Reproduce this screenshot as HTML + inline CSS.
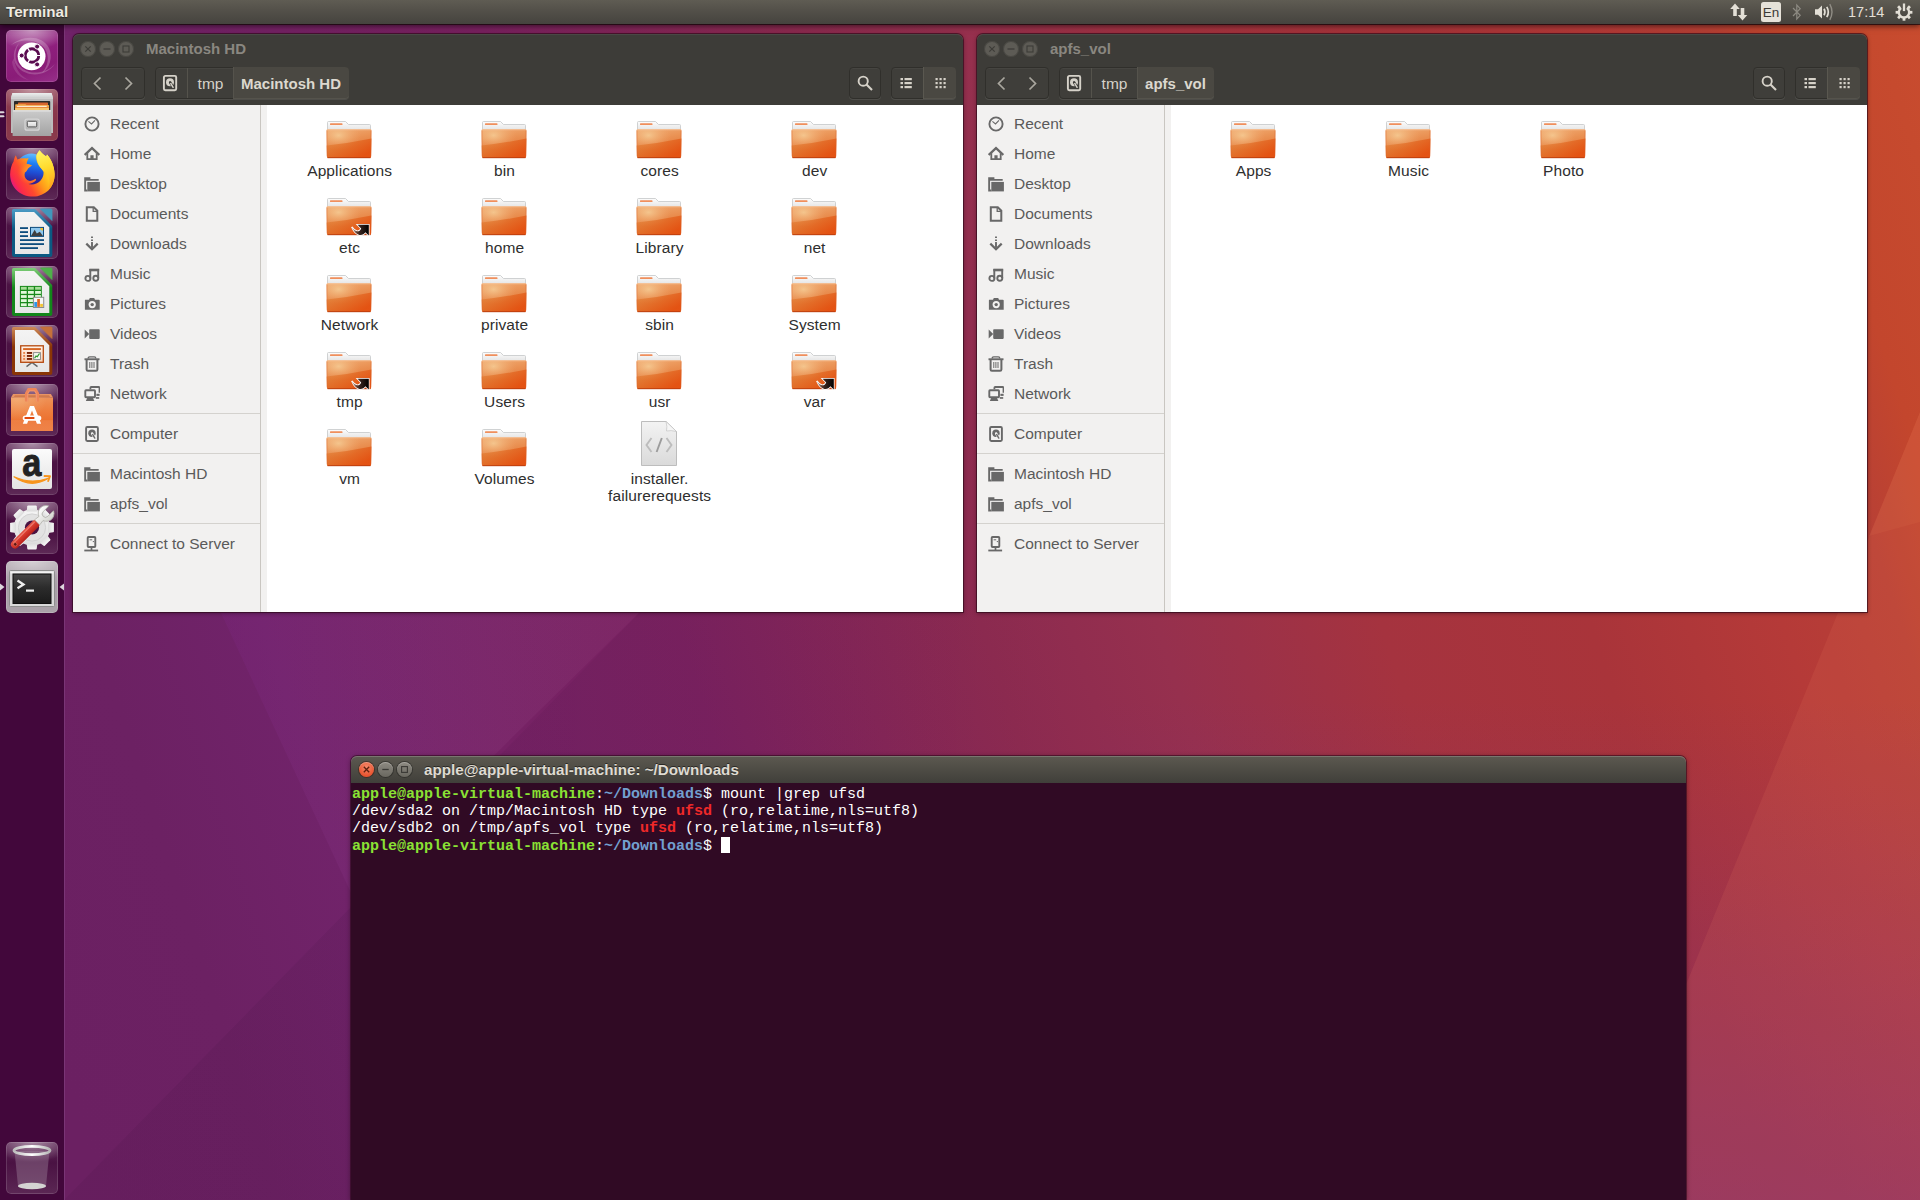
<!DOCTYPE html>
<html lang="en">
<head>
<meta charset="utf-8">
<title>Ubuntu Desktop</title>
<style>
html,body{margin:0;padding:0;}
body{width:1920px;height:1200px;overflow:hidden;background:#6c2163;font-family:"Liberation Sans","DejaVu Sans",sans-serif;font-size:15px;color:#3c3c3c;}
#desktop{position:relative;width:1920px;height:1200px;overflow:hidden;}
#wall{position:absolute;left:0;top:0;width:1920px;height:1200px;display:block;}
svg{display:block;}
.abs{position:absolute;}
/* top panel */
#panel{position:absolute;left:0;top:0;width:1920px;height:24px;background:linear-gradient(#5f5c53 0%,#54514a 40%,#45433e 100%);box-shadow:0 1px 0 rgba(25,8,12,.75),0 2px 6px rgba(0,0,0,.6);}
#panel .title{position:absolute;left:6px;top:0;height:24px;line-height:24px;font-weight:bold;font-size:15.200px;color:#eeeae1;text-shadow:0 1px 1px rgba(0,0,0,.45);letter-spacing:0;}
#panel .ind{position:absolute;top:0;height:24px;}
#panel .clock{position:absolute;left:1848px;top:0;width:36px;height:24px;line-height:24px;font-size:14.5px;color:#e3dfd6;text-align:center;white-space:nowrap;}
#panel .en{position:absolute;left:1761px;top:2px;width:20px;height:20px;border-radius:2.5px;background:#e6e2d9;color:#3c3b37;font-weight:normal;font-size:13.500px;line-height:22px;text-align:center;letter-spacing:0;}
/* launcher */
#launcher{position:absolute;left:0;top:24px;width:64px;height:1176px;background:#42073b;border-right:1px solid #7a3576;}
.tile{position:absolute;left:6px;width:52px;height:52px;border-radius:5px;box-sizing:border-box;overflow:hidden;}
.tile svg{position:absolute;left:0;top:0;}
.tile.dk{background:radial-gradient(ellipse 42px 22px at 50% 0%,rgba(255,255,255,.5),rgba(255,255,255,0) 100%),linear-gradient(#5c2454 0%,#4b1243 40%,#4c1344 62%,#5e2a57 100%);box-shadow:inset 0 0 0 1px rgba(255,255,255,.13);}
/* windows */
.win{position:absolute;border-radius:6px 6px 0 0;box-shadow:0 0 0 1px rgba(45,8,25,.62),0 1px 4px rgba(20,0,10,.5);}
.hdr{position:absolute;left:0;top:0;width:100%;height:71px;background:#3d3c38;border-radius:6px 6px 0 0;box-shadow:inset 0 1px 0 rgba(255,255,255,.07);}
.wtitle{position:absolute;left:73px;top:5px;height:20px;line-height:20px;font-weight:bold;font-size:15px;color:#8a8780;white-space:nowrap;}
.wb{position:absolute;top:7px;width:16px;height:16px;border-radius:8px;background:#5d5b55;box-shadow:inset 0 0 0 1px rgba(40,40,36,.35);}
.tbtn{position:absolute;top:33px;height:32px;box-sizing:border-box;border:1px solid #302f2b;background:#3f3e3a;border-radius:4px;box-shadow:inset 0 1px 0 rgba(255,255,255,.04),0 1px 0 rgba(255,255,255,.09);}
.pathtxt{position:absolute;top:0;height:30px;line-height:31px;font-size:15.500px;color:#d6d2c9;white-space:nowrap;text-align:center;}
.side{position:absolute;left:0;top:71px;width:187px;height:507px;background:#f2f1f0;border-right:1px solid #c9c6c1;}
.gap{position:absolute;left:188px;top:71px;width:6px;height:507px;background:#f2f1f0;}
.files{position:absolute;left:194px;top:71px;width:696px;height:507px;background:#fff;}
.srow{position:absolute;left:0;width:187px;height:30px;}
.srow .lab{position:absolute;left:37px;top:0;height:30px;line-height:30px;font-size:15.500px;color:#5a5a5a;white-space:nowrap;}
.srow svg{position:absolute;left:11px;top:7px;}
.ssep{position:absolute;left:0;width:187px;height:1px;background:#d4d2ce;}
.item{position:absolute;width:150px;text-align:center;}
.item .lab{position:absolute;left:.6px;width:150px;text-align:center;font-size:15.500px;letter-spacing:.1px;line-height:17px;color:#2e2e2e;white-space:nowrap;}
/* terminal */
#term{position:absolute;left:351px;top:756px;width:1335px;height:444px;border-radius:6px 6px 0 0;box-shadow:0 0 0 1px rgba(45,8,25,.55),0 1px 5px rgba(20,0,10,.5);}
#term .tb{position:absolute;left:0;top:0;width:100%;height:27px;border-radius:6px 6px 0 0;background:linear-gradient(#5c5950,#403f3a);box-shadow:inset 0 1px 0 rgba(255,255,255,.18);}
#term .tt{position:absolute;left:73px;top:3px;height:22px;line-height:22px;font-weight:bold;font-size:15.200px;color:#dfdbd2;white-space:nowrap;text-shadow:0 -1px 0 rgba(0,0,0,.5);}
#term .body{position:absolute;left:0;top:27px;width:100%;height:417px;background:#300a24;}
#term pre{position:absolute;left:1px;top:2.500px;margin:0;font-family:"Liberation Mono","DejaVu Sans Mono",monospace;font-size:15px;line-height:17px;color:#fff;}
.g{color:#8ae234;font-weight:bold;}
.b{color:#729fcf;font-weight:bold;}
.r{color:#ef2929;font-weight:bold;}
.cur{display:inline-block;width:9px;height:16px;background:#fff;vertical-align:-3px;}

</style>
</head>
<body>
<div id="desktop">
<svg id="wall" width="1920" height="1200" viewBox="0 0 1920 1200">
<defs>
<linearGradient id="wg" gradientUnits="userSpaceOnUse" x1="0" y1="1200" x2="2089" y2="521">
<stop offset="0" stop-color="#6b2062"/>
<stop offset="0.045" stop-color="#6b2062"/>
<stop offset="0.121" stop-color="#6c2163"/>
<stop offset="0.195" stop-color="#71236a"/>
<stop offset="0.374" stop-color="#7a2160"/>
<stop offset="0.506" stop-color="#8c2a50"/>
<stop offset="0.582" stop-color="#96304e"/>
<stop offset="0.679" stop-color="#a5333f"/>
<stop offset="0.77" stop-color="#a9343a"/>
<stop offset="0.853" stop-color="#b53a38"/>
<stop offset="0.904" stop-color="#b84035"/>
<stop offset="0.935" stop-color="#c3462d"/>
<stop offset="0.977" stop-color="#c64a2e"/>
<stop offset="1" stop-color="#c94c2f"/>
</linearGradient>
<linearGradient id="wb" gradientUnits="userSpaceOnUse" x1="0" y1="700" x2="0" y2="1200"><stop offset="0" stop-color="#7a2e80" stop-opacity="0"/><stop offset="1" stop-color="#7a2e80" stop-opacity=".5"/></linearGradient>
<linearGradient id="wd" gradientUnits="userSpaceOnUse" x1="350" y1="0" x2="1100" y2="0"><stop offset="0" stop-color="#1a0020" stop-opacity=".065"/><stop offset="1" stop-color="#1a0020" stop-opacity="0"/></linearGradient>
<linearGradient id="wl" gradientUnits="userSpaceOnUse" x1="220" y1="0" x2="640" y2="0"><stop offset="0" stop-color="#8a2aa0" stop-opacity=".13"/><stop offset="1" stop-color="#e0a0c0" stop-opacity=".045"/></linearGradient>
</defs>
<rect width="1920" height="1200" fill="url(#wg)"/>
<rect x="1100" y="700" width="820" height="500" fill="url(#wb)"/>
<polygon points="64,1200 652,600 1100,600 1100,1200" fill="url(#wd)"/>
<polygon points="215,600 652,600 352,895" fill="url(#wl)"/>
<polygon points="1920,412 1920,1200 1598,1200" fill="#ff9868" opacity="0.1"/>
<polygon points="1869,536 1920,522 1920,412" fill="#ff9868" opacity="0.08"/>
</svg>

<svg width="0" height="0" style="position:absolute">
<defs>
<linearGradient id="fo1" x1="0" y1="0" x2="0.300" y2="1"><stop offset="0" stop-color="#f1ae76"/><stop offset="0.45" stop-color="#ea9254"/><stop offset="1" stop-color="#e26e2e"/></linearGradient>
<radialGradient id="fo2" cx="0.27" cy="0.22" r="0.5"><stop offset="0" stop-color="#f6cf98" stop-opacity=".8"/><stop offset="1" stop-color="#f0aa70" stop-opacity="0"/></radialGradient>
<linearGradient id="fo3" x1="0" y1="0" x2="0" y2="1"><stop offset="0" stop-color="#fdfdfd"/><stop offset="1" stop-color="#dcdcdc"/></linearGradient>
<linearGradient id="fo4" x1="0" y1="0" x2="1" y2="0.600"><stop offset="0" stop-color="#df8032" stop-opacity=".55"/><stop offset="1" stop-color="#e44c0c" stop-opacity=".8"/></linearGradient>
<linearGradient id="lk1" x1="0" y1="0" x2="1" y2="0"><stop offset="0" stop-color="#8a5a48" stop-opacity=".7"/><stop offset="0.45" stop-color="#3a2620"/><stop offset="1" stop-color="#000"/></linearGradient>
<g id="fold">
<path d="M1.500 1.500 Q1.500 0.500 2.500 0.500 H19.500 L22.500 3.500 H43.500 Q44.500 3.500 44.500 4.500 V12 H1.500 Z" fill="url(#fo3)" stroke="#c4c6c8" stroke-width=".8"/>
<rect x="4" y="2.300" width="12.500" height="1.700" rx=".6" fill="#f08f5c"/>
<path d="M0.500 9.500 Q0.500 8 2 8 H44 Q45.500 8 45.500 9.500 L45 35.500 Q45 37 43.500 37 H2.500 Q1 37 1 35.500 Z" fill="url(#fo1)"/>
<path d="M0.500 9.500 Q0.500 8 2 8 H44 Q45.500 8 45.500 9.500 L45 35.500 Q45 37 43.500 37 H2.500 Q1 37 1 35.500 Z" fill="url(#fo2)"/>
<path d="M0.600 24.500 Q24 22 45.400 17.500 L45 35.500 Q45 37 43.500 37 H2.500 Q1 37 1 35.500 Z" fill="url(#fo4)"/>
<path d="M1.500 36.600 H44.500" stroke="#b83a0c" stroke-width="1.100" opacity=".7"/>
<path d="M1.200 8.700 H44.800" stroke="#f6c9a6" stroke-width=".9" opacity=".9"/>
<path d="M1 9.500 V35.500 M45 9.500 V35.500" stroke="#d9602a" stroke-width=".8" opacity=".5"/>
</g>
<g id="lnk">
<path d="M31.500 26.700 H42.800 V37.600 L39.400 34.200 C37 37.900 30.500 39.500 25.800 29 C29.500 34.800 33.600 34.200 35.200 30.400 Z" fill="url(#lk1)" stroke="#fff" stroke-width="1.500" stroke-linejoin="miter" paint-order="stroke"/>
</g>
</defs>
</svg><div class="win" style="left:73px;top:34px;width:890px;height:578px;"><div class="hdr"><div class="wb" style="left:7px"><svg width="16" height="16" viewBox="0 0 16 16"><path d="M5.300 5.300 L10.700 10.700 M10.700 5.300 L5.300 10.700" stroke="#3d3c38" stroke-width="1.200"/></svg></div><div class="wb" style="left:26px"><svg width="16" height="16" viewBox="0 0 16 16"><path d="M4.500 8 H11.500" stroke="#3d3c38" stroke-width="1.300"/></svg></div><div class="wb" style="left:45px"><svg width="16" height="16" viewBox="0 0 16 16"><rect x="5" y="5" width="6" height="6" fill="none" stroke="#3d3c38" stroke-width="1.100"/></svg></div><div class="wtitle">Macintosh HD</div><div class="tbtn" style="left:8px;width:64px;"><svg class="abs" style="left:0;top:0" width="62" height="30" viewBox="0 0 62 30"><path d="M18.500 9.500 L12.500 15.500 L18.500 21.500" fill="none" stroke="#aaa79f" stroke-width="1.700"/><path d="M43.500 9.500 L49.500 15.500 L43.500 21.500" fill="none" stroke="#aaa79f" stroke-width="1.700"/></svg></div><div class="tbtn" style="left:82px;width:194px;"><svg class="abs" style="left:5px;top:6px" width="18" height="18" viewBox="0 0 18 18"><rect x="2.900" y="1.900" width="12.300" height="14.300" rx="1.400" fill="none" stroke="#d6d2c9" stroke-width="1.900"/><circle cx="9" cy="8.200" r="4" fill="#d6d2c9"/><path d="M9.200 8.500 L12.200 13.400" stroke="#3d3c38" stroke-width="2.600" stroke-linecap="round"/><path d="M9.600 9.200 L12.100 13.300" stroke="#d6d2c9" stroke-width="1.500" stroke-linecap="round"/><circle cx="9" cy="8.200" r="1" fill="#3d3c38"/></svg><div class="abs" style="left:31px;top:0;width:1px;height:30px;background:#55534c"></div><div class="pathtxt" style="left:32px;width:45px;">tmp</div><div class="abs" style="left:77px;top:-1px;width:116px;height:32px;background:#4a4842;border-radius:0 4px 4px 0;box-shadow:inset 1px 0 0 #55534c,inset 0 -1px 0 #55534c;"></div><div class="pathtxt" style="left:77px;width:116px;font-weight:bold;font-size:15px;color:#dcd8cf;">Macintosh HD</div></div><div class="tbtn" style="left:776px;width:32px;"><svg class="abs" style="left:0;top:0" width="30" height="30" viewBox="0 0 30 30"><circle cx="13.200" cy="13.200" r="4.600" fill="none" stroke="#d6d2c9" stroke-width="1.900"/><path d="M16.500 16.500 L22 22" stroke="#d6d2c9" stroke-width="2.100"/></svg></div><div class="tbtn" style="left:818px;width:65px;"><div class="abs" style="left:31px;top:-1px;width:33px;height:32px;background:#4a4842;border-radius:0 4px 4px 0;box-shadow:inset 1px 0 0 #5a5850,inset 0 -1px 0 #55534c;"></div><svg class="abs" style="left:0;top:0" width="63" height="30" viewBox="0 0 63 30"><g fill="#d6d2c9"><rect x="8.500" y="10" width="2.500" height="2.200"/><rect x="12.500" y="10" width="7.300" height="2.200"/><rect x="8.500" y="14" width="2.500" height="2.200"/><rect x="12.500" y="14" width="7.300" height="2.200"/><rect x="8.500" y="18" width="2.500" height="2.200"/><rect x="12.500" y="18" width="7.300" height="2.200"/><rect x="43.5" y="10" width="2.200" height="2.200"/><rect x="43.5" y="14" width="2.200" height="2.200"/><rect x="43.5" y="18" width="2.200" height="2.200"/><rect x="47.5" y="10" width="2.200" height="2.200"/><rect x="47.5" y="14" width="2.200" height="2.200"/><rect x="47.5" y="18" width="2.200" height="2.200"/><rect x="51.5" y="10" width="2.200" height="2.200"/><rect x="51.5" y="14" width="2.200" height="2.200"/><rect x="51.5" y="18" width="2.200" height="2.200"/></g></svg></div></div><div class="side"><div class="srow" style="top:4px"><svg width="16" height="16" viewBox="0 0 16 16" ><circle cx="8" cy="8" r="6.600" fill="none" stroke="#686868" stroke-width="1.900"/><path d="M4.400 5.400 L7.500 8 L11 4.300" fill="none" stroke="#686868" stroke-width="1.100"/></svg><div class="lab">Recent</div></div><div class="srow" style="top:34px"><svg width="16" height="16" viewBox="0 0 16 16" ><path d="M0.700 8.900 L8 2.100 L15.300 8.900" fill="none" stroke="#686868" stroke-width="2.200"/><path d="M2.400 8.300 V14 H13.600 V8.300 L11.800 6.600 V12.200 H9.600 V9.200 H6.400 V12.200 H4.200 V6.600 Z" fill="#686868"/></svg><div class="lab">Home</div></div><div class="srow" style="top:64px"><svg width="16" height="16" viewBox="0 0 16 16" ><path d="M0.200 1.300 H6.400 V3 H14.700 V4.700 H2.100 V13.600 H3.400 V15.400 H0.200 Z" fill="#686868"/><rect x="3.300" y="5.900" width="12.600" height="9.500" fill="#686868"/></svg><div class="lab">Desktop</div></div><div class="srow" style="top:94px"><svg width="16" height="16" viewBox="0 0 16 16" ><path d="M2.800 1.200 H9.800 L13.300 4.700 V14.800 H2.800 Z" fill="none" stroke="#686868" stroke-width="2" stroke-linejoin="miter"/><path d="M9.200 1.200 V5.400 H13.300" fill="none" stroke="#686868" stroke-width="1.300"/></svg><div class="lab">Documents</div></div><div class="srow" style="top:124px"><svg width="16" height="16" viewBox="0 0 16 16" ><path d="M8 0.500 V7" fill="none" stroke="#686868" stroke-width="1.900" stroke-dasharray="1.600 1.300"/><path d="M2.300 7.600 L8 13.300 L13.700 7.600" fill="none" stroke="#686868" stroke-width="2.200"/><rect x="7.050" y="6.300" width="1.900" height="5.500" fill="#686868"/></svg><div class="lab">Downloads</div></div><div class="srow" style="top:154px"><svg width="16" height="16" viewBox="0 0 16 16" ><path d="M6.300 12.500 V4 H14.200 V12" fill="none" stroke="#686868" stroke-width="1.900"/><rect x="5.350" y="2.700" width="9.800" height="2.600" fill="#686868"/><circle cx="3.900" cy="12.400" r="2.500" fill="none" stroke="#686868" stroke-width="1.900"/><circle cx="11.800" cy="12.300" r="2.500" fill="none" stroke="#686868" stroke-width="1.900"/></svg><div class="lab">Music</div></div><div class="srow" style="top:184px"><svg width="16" height="16" viewBox="0 0 16 16" ><path d="M1.200 3.700 H5 L5.800 2 H10.200 L11 3.700 H14.800 Q15.700 3.700 15.700 4.500 V13.700 H0.900 V4.500 Q0.900 3.700 1.200 3.700 Z" fill="#686868"/><circle cx="8.200" cy="8.600" r="3.600" fill="#f2f1f0"/><circle cx="8.200" cy="8.600" r="1.700" fill="#686868"/></svg><div class="lab">Pictures</div></div><div class="srow" style="top:214px"><svg width="16" height="16" viewBox="0 0 16 16" ><rect x="5.200" y="3.300" width="10.500" height="9.600" rx="0.800" fill="#686868"/><path d="M0.700 3.600 L5.200 8.100 L0.700 12.600 Z" fill="#686868"/></svg><div class="lab">Videos</div></div><div class="srow" style="top:244px"><svg width="16" height="16" viewBox="0 0 16 16" ><path d="M4.200 2.400 Q4.200 0.900 5.700 0.900 H10.300 Q11.800 0.900 11.800 2.400" fill="none" stroke="#686868" stroke-width="1.400"/><rect x="0.500" y="2.300" width="15" height="1.900" fill="#686868"/><path d="M2.600 4 V13.400 Q2.600 14.700 3.900 14.700 H12.100 Q13.400 14.700 13.400 13.400 V4" fill="none" stroke="#686868" stroke-width="2"/><path d="M5.800 6 V12 M7.900 6 V12 M10 6 V12" stroke="#686868" stroke-width="1"/></svg><div class="lab">Trash</div></div><div class="srow" style="top:274px"><svg width="16" height="16" viewBox="0 0 16 16" ><path d="M6.400 3.200 V1.800 Q6.400 1 7.200 1 H14.700 Q15.500 1 15.500 1.800 V6.800" fill="none" stroke="#686868" stroke-width="1.800"/><path d="M12.400 9.900 H15.600 V7.800 H12.400 Z" fill="#686868"/><rect x="1.300" y="4.300" width="9.700" height="7" rx="0.700" fill="none" stroke="#686868" stroke-width="1.900"/><path d="M3.200 12 H9 L10.400 15 H1.800 Z" fill="#686868"/><path d="M11.800 11.100 H15.200 V12.800 H11.800 Z" fill="#686868"/></svg><div class="lab">Network</div></div><div class="ssep" style="top:308px"></div><div class="srow" style="top:314px"><svg width="16" height="16" viewBox="0 0 16 16" ><rect x="2.100" y="1" width="11.800" height="14" rx="1.200" fill="none" stroke="#686868" stroke-width="1.900"/><circle cx="8" cy="7.300" r="3.700" fill="#686868"/><path d="M8.200 7.600 L10.900 12.200" stroke="#f2f1f0" stroke-width="2.500" stroke-linecap="round"/><path d="M8.600 8.300 L10.800 12.100" stroke="#686868" stroke-width="1.400" stroke-linecap="round"/><circle cx="8" cy="7.300" r="0.900" fill="#f2f1f0"/></svg><div class="lab">Computer</div></div><div class="ssep" style="top:348px"></div><div class="srow" style="top:354px"><svg width="16" height="16" viewBox="0 0 16 16" ><path d="M0.200 1.300 H6.400 V3 H14.700 V4.700 H2.100 V13.600 H3.400 V15.400 H0.200 Z" fill="#686868"/><rect x="3.300" y="5.900" width="12.600" height="9.500" fill="#686868"/></svg><div class="lab">Macintosh HD</div></div><div class="srow" style="top:384px"><svg width="16" height="16" viewBox="0 0 16 16" ><path d="M0.200 1.300 H6.400 V3 H14.700 V4.700 H2.100 V13.600 H3.400 V15.400 H0.200 Z" fill="#686868"/><rect x="3.300" y="5.900" width="12.600" height="9.500" fill="#686868"/></svg><div class="lab">apfs_vol</div></div><div class="ssep" style="top:418px"></div><div class="srow" style="top:424px"><svg width="16" height="16" viewBox="0 0 16 16" ><rect x="3.700" y="1" width="7.600" height="10" rx="0.800" fill="none" stroke="#686868" stroke-width="1.900"/><rect x="5.600" y="3.300" width="2.600" height="1" fill="#686868"/><rect x="8.800" y="5" width="1.100" height="1.100" fill="#686868"/><path d="M7.500 11.500 V14" stroke="#686868" stroke-width="1.700"/><rect x="0.300" y="13.600" width="13.800" height="1.800" fill="#686868"/></svg><div class="lab">Connect to Server</div></div></div><div class="gap"></div><div class="files"><div class="item" style="left:7px;top:16px;"><svg class="abs" style="left:52px;top:0" width="46" height="38" viewBox="0 0 46 38"><use href="#fold"/></svg><div class="lab" style="top:41px">Applications</div></div><div class="item" style="left:162px;top:16px;"><svg class="abs" style="left:52px;top:0" width="46" height="38" viewBox="0 0 46 38"><use href="#fold"/></svg><div class="lab" style="top:41px">bin</div></div><div class="item" style="left:317px;top:16px;"><svg class="abs" style="left:52px;top:0" width="46" height="38" viewBox="0 0 46 38"><use href="#fold"/></svg><div class="lab" style="top:41px">cores</div></div><div class="item" style="left:472px;top:16px;"><svg class="abs" style="left:52px;top:0" width="46" height="38" viewBox="0 0 46 38"><use href="#fold"/></svg><div class="lab" style="top:41px">dev</div></div><div class="item" style="left:7px;top:93px;"><svg class="abs" style="left:52px;top:0" width="46" height="38" viewBox="0 0 46 38"><use href="#fold"/><use href="#lnk"/></svg><div class="lab" style="top:41px">etc</div></div><div class="item" style="left:162px;top:93px;"><svg class="abs" style="left:52px;top:0" width="46" height="38" viewBox="0 0 46 38"><use href="#fold"/></svg><div class="lab" style="top:41px">home</div></div><div class="item" style="left:317px;top:93px;"><svg class="abs" style="left:52px;top:0" width="46" height="38" viewBox="0 0 46 38"><use href="#fold"/></svg><div class="lab" style="top:41px">Library</div></div><div class="item" style="left:472px;top:93px;"><svg class="abs" style="left:52px;top:0" width="46" height="38" viewBox="0 0 46 38"><use href="#fold"/></svg><div class="lab" style="top:41px">net</div></div><div class="item" style="left:7px;top:170px;"><svg class="abs" style="left:52px;top:0" width="46" height="38" viewBox="0 0 46 38"><use href="#fold"/></svg><div class="lab" style="top:41px">Network</div></div><div class="item" style="left:162px;top:170px;"><svg class="abs" style="left:52px;top:0" width="46" height="38" viewBox="0 0 46 38"><use href="#fold"/></svg><div class="lab" style="top:41px">private</div></div><div class="item" style="left:317px;top:170px;"><svg class="abs" style="left:52px;top:0" width="46" height="38" viewBox="0 0 46 38"><use href="#fold"/></svg><div class="lab" style="top:41px">sbin</div></div><div class="item" style="left:472px;top:170px;"><svg class="abs" style="left:52px;top:0" width="46" height="38" viewBox="0 0 46 38"><use href="#fold"/></svg><div class="lab" style="top:41px">System</div></div><div class="item" style="left:7px;top:247px;"><svg class="abs" style="left:52px;top:0" width="46" height="38" viewBox="0 0 46 38"><use href="#fold"/><use href="#lnk"/></svg><div class="lab" style="top:41px">tmp</div></div><div class="item" style="left:162px;top:247px;"><svg class="abs" style="left:52px;top:0" width="46" height="38" viewBox="0 0 46 38"><use href="#fold"/></svg><div class="lab" style="top:41px">Users</div></div><div class="item" style="left:317px;top:247px;"><svg class="abs" style="left:52px;top:0" width="46" height="38" viewBox="0 0 46 38"><use href="#fold"/></svg><div class="lab" style="top:41px">usr</div></div><div class="item" style="left:472px;top:247px;"><svg class="abs" style="left:52px;top:0" width="46" height="38" viewBox="0 0 46 38"><use href="#fold"/><use href="#lnk"/></svg><div class="lab" style="top:41px">var</div></div><div class="item" style="left:7px;top:324px;"><svg class="abs" style="left:52px;top:0" width="46" height="38" viewBox="0 0 46 38"><use href="#fold"/></svg><div class="lab" style="top:41px">vm</div></div><div class="item" style="left:162px;top:324px;"><svg class="abs" style="left:52px;top:0" width="46" height="38" viewBox="0 0 46 38"><use href="#fold"/></svg><div class="lab" style="top:41px">Volumes</div></div><div class="item" style="left:317px;top:316px;"><svg class="abs" style="left:56px;top:0" width="38" height="46" viewBox="0 0 38 46"><defs><linearGradient id="pg1" x1="0" y1="0" x2="0" y2="1"><stop offset="0" stop-color="#f3f3f3"/><stop offset="1" stop-color="#dadada"/></linearGradient></defs><path d="M1.500 0.500 H26 L36.500 10.500 V44.500 H1.500 Z" fill="url(#pg1)" stroke="#bdbdbd" stroke-width="1"/><path d="M26 0.500 Q27.500 6 26.500 10 Q31 9 36.500 10.500 Z" fill="#f6f6f6" stroke="#c4c4c4" stroke-width=".7"/><path d="M11.500 17 L6.500 24 L11.500 31 M26.500 17 L31.500 24 L26.500 31" fill="none" stroke="#bcbcbc" stroke-width="1.900"/><path d="M21.800 17 L16.600 31" fill="none" stroke="#9c9c9c" stroke-width="1.900"/></svg><div class="lab" style="top:49px">installer.</div><div class="lab" style="top:66px">failurerequests</div></div></div></div><div class="win" style="left:977px;top:34px;width:890px;height:578px;"><div class="hdr"><div class="wb" style="left:7px"><svg width="16" height="16" viewBox="0 0 16 16"><path d="M5.300 5.300 L10.700 10.700 M10.700 5.300 L5.300 10.700" stroke="#3d3c38" stroke-width="1.200"/></svg></div><div class="wb" style="left:26px"><svg width="16" height="16" viewBox="0 0 16 16"><path d="M4.500 8 H11.500" stroke="#3d3c38" stroke-width="1.300"/></svg></div><div class="wb" style="left:45px"><svg width="16" height="16" viewBox="0 0 16 16"><rect x="5" y="5" width="6" height="6" fill="none" stroke="#3d3c38" stroke-width="1.100"/></svg></div><div class="wtitle">apfs_vol</div><div class="tbtn" style="left:8px;width:64px;"><svg class="abs" style="left:0;top:0" width="62" height="30" viewBox="0 0 62 30"><path d="M18.500 9.500 L12.500 15.500 L18.500 21.500" fill="none" stroke="#aaa79f" stroke-width="1.700"/><path d="M43.500 9.500 L49.500 15.500 L43.500 21.500" fill="none" stroke="#aaa79f" stroke-width="1.700"/></svg></div><div class="tbtn" style="left:82px;width:155px;"><svg class="abs" style="left:5px;top:6px" width="18" height="18" viewBox="0 0 18 18"><rect x="2.900" y="1.900" width="12.300" height="14.300" rx="1.400" fill="none" stroke="#d6d2c9" stroke-width="1.900"/><circle cx="9" cy="8.200" r="4" fill="#d6d2c9"/><path d="M9.200 8.500 L12.200 13.400" stroke="#3d3c38" stroke-width="2.600" stroke-linecap="round"/><path d="M9.600 9.200 L12.100 13.300" stroke="#d6d2c9" stroke-width="1.500" stroke-linecap="round"/><circle cx="9" cy="8.200" r="1" fill="#3d3c38"/></svg><div class="abs" style="left:31px;top:0;width:1px;height:30px;background:#55534c"></div><div class="pathtxt" style="left:32px;width:45px;">tmp</div><div class="abs" style="left:77px;top:-1px;width:77px;height:32px;background:#4a4842;border-radius:0 4px 4px 0;box-shadow:inset 1px 0 0 #55534c,inset 0 -1px 0 #55534c;"></div><div class="pathtxt" style="left:77px;width:77px;font-weight:bold;font-size:15px;color:#dcd8cf;">apfs_vol</div></div><div class="tbtn" style="left:776px;width:32px;"><svg class="abs" style="left:0;top:0" width="30" height="30" viewBox="0 0 30 30"><circle cx="13.200" cy="13.200" r="4.600" fill="none" stroke="#d6d2c9" stroke-width="1.900"/><path d="M16.500 16.500 L22 22" stroke="#d6d2c9" stroke-width="2.100"/></svg></div><div class="tbtn" style="left:818px;width:65px;"><div class="abs" style="left:31px;top:-1px;width:33px;height:32px;background:#4a4842;border-radius:0 4px 4px 0;box-shadow:inset 1px 0 0 #5a5850,inset 0 -1px 0 #55534c;"></div><svg class="abs" style="left:0;top:0" width="63" height="30" viewBox="0 0 63 30"><g fill="#d6d2c9"><rect x="8.500" y="10" width="2.500" height="2.200"/><rect x="12.500" y="10" width="7.300" height="2.200"/><rect x="8.500" y="14" width="2.500" height="2.200"/><rect x="12.500" y="14" width="7.300" height="2.200"/><rect x="8.500" y="18" width="2.500" height="2.200"/><rect x="12.500" y="18" width="7.300" height="2.200"/><rect x="43.5" y="10" width="2.200" height="2.200"/><rect x="43.5" y="14" width="2.200" height="2.200"/><rect x="43.5" y="18" width="2.200" height="2.200"/><rect x="47.5" y="10" width="2.200" height="2.200"/><rect x="47.5" y="14" width="2.200" height="2.200"/><rect x="47.5" y="18" width="2.200" height="2.200"/><rect x="51.5" y="10" width="2.200" height="2.200"/><rect x="51.5" y="14" width="2.200" height="2.200"/><rect x="51.5" y="18" width="2.200" height="2.200"/></g></svg></div></div><div class="side"><div class="srow" style="top:4px"><svg width="16" height="16" viewBox="0 0 16 16" ><circle cx="8" cy="8" r="6.600" fill="none" stroke="#686868" stroke-width="1.900"/><path d="M4.400 5.400 L7.500 8 L11 4.300" fill="none" stroke="#686868" stroke-width="1.100"/></svg><div class="lab">Recent</div></div><div class="srow" style="top:34px"><svg width="16" height="16" viewBox="0 0 16 16" ><path d="M0.700 8.900 L8 2.100 L15.300 8.900" fill="none" stroke="#686868" stroke-width="2.200"/><path d="M2.400 8.300 V14 H13.600 V8.300 L11.800 6.600 V12.200 H9.600 V9.200 H6.400 V12.200 H4.200 V6.600 Z" fill="#686868"/></svg><div class="lab">Home</div></div><div class="srow" style="top:64px"><svg width="16" height="16" viewBox="0 0 16 16" ><path d="M0.200 1.300 H6.400 V3 H14.700 V4.700 H2.100 V13.600 H3.400 V15.400 H0.200 Z" fill="#686868"/><rect x="3.300" y="5.900" width="12.600" height="9.500" fill="#686868"/></svg><div class="lab">Desktop</div></div><div class="srow" style="top:94px"><svg width="16" height="16" viewBox="0 0 16 16" ><path d="M2.800 1.200 H9.800 L13.300 4.700 V14.800 H2.800 Z" fill="none" stroke="#686868" stroke-width="2" stroke-linejoin="miter"/><path d="M9.200 1.200 V5.400 H13.300" fill="none" stroke="#686868" stroke-width="1.300"/></svg><div class="lab">Documents</div></div><div class="srow" style="top:124px"><svg width="16" height="16" viewBox="0 0 16 16" ><path d="M8 0.500 V7" fill="none" stroke="#686868" stroke-width="1.900" stroke-dasharray="1.600 1.300"/><path d="M2.300 7.600 L8 13.300 L13.700 7.600" fill="none" stroke="#686868" stroke-width="2.200"/><rect x="7.050" y="6.300" width="1.900" height="5.500" fill="#686868"/></svg><div class="lab">Downloads</div></div><div class="srow" style="top:154px"><svg width="16" height="16" viewBox="0 0 16 16" ><path d="M6.300 12.500 V4 H14.200 V12" fill="none" stroke="#686868" stroke-width="1.900"/><rect x="5.350" y="2.700" width="9.800" height="2.600" fill="#686868"/><circle cx="3.900" cy="12.400" r="2.500" fill="none" stroke="#686868" stroke-width="1.900"/><circle cx="11.800" cy="12.300" r="2.500" fill="none" stroke="#686868" stroke-width="1.900"/></svg><div class="lab">Music</div></div><div class="srow" style="top:184px"><svg width="16" height="16" viewBox="0 0 16 16" ><path d="M1.200 3.700 H5 L5.800 2 H10.200 L11 3.700 H14.800 Q15.700 3.700 15.700 4.500 V13.700 H0.900 V4.500 Q0.900 3.700 1.200 3.700 Z" fill="#686868"/><circle cx="8.200" cy="8.600" r="3.600" fill="#f2f1f0"/><circle cx="8.200" cy="8.600" r="1.700" fill="#686868"/></svg><div class="lab">Pictures</div></div><div class="srow" style="top:214px"><svg width="16" height="16" viewBox="0 0 16 16" ><rect x="5.200" y="3.300" width="10.500" height="9.600" rx="0.800" fill="#686868"/><path d="M0.700 3.600 L5.200 8.100 L0.700 12.600 Z" fill="#686868"/></svg><div class="lab">Videos</div></div><div class="srow" style="top:244px"><svg width="16" height="16" viewBox="0 0 16 16" ><path d="M4.200 2.400 Q4.200 0.900 5.700 0.900 H10.300 Q11.800 0.900 11.800 2.400" fill="none" stroke="#686868" stroke-width="1.400"/><rect x="0.500" y="2.300" width="15" height="1.900" fill="#686868"/><path d="M2.600 4 V13.400 Q2.600 14.700 3.900 14.700 H12.100 Q13.400 14.700 13.400 13.400 V4" fill="none" stroke="#686868" stroke-width="2"/><path d="M5.800 6 V12 M7.900 6 V12 M10 6 V12" stroke="#686868" stroke-width="1"/></svg><div class="lab">Trash</div></div><div class="srow" style="top:274px"><svg width="16" height="16" viewBox="0 0 16 16" ><path d="M6.400 3.200 V1.800 Q6.400 1 7.200 1 H14.700 Q15.500 1 15.500 1.800 V6.800" fill="none" stroke="#686868" stroke-width="1.800"/><path d="M12.400 9.900 H15.600 V7.800 H12.400 Z" fill="#686868"/><rect x="1.300" y="4.300" width="9.700" height="7" rx="0.700" fill="none" stroke="#686868" stroke-width="1.900"/><path d="M3.200 12 H9 L10.400 15 H1.800 Z" fill="#686868"/><path d="M11.800 11.100 H15.200 V12.800 H11.800 Z" fill="#686868"/></svg><div class="lab">Network</div></div><div class="ssep" style="top:308px"></div><div class="srow" style="top:314px"><svg width="16" height="16" viewBox="0 0 16 16" ><rect x="2.100" y="1" width="11.800" height="14" rx="1.200" fill="none" stroke="#686868" stroke-width="1.900"/><circle cx="8" cy="7.300" r="3.700" fill="#686868"/><path d="M8.200 7.600 L10.900 12.200" stroke="#f2f1f0" stroke-width="2.500" stroke-linecap="round"/><path d="M8.600 8.300 L10.800 12.100" stroke="#686868" stroke-width="1.400" stroke-linecap="round"/><circle cx="8" cy="7.300" r="0.900" fill="#f2f1f0"/></svg><div class="lab">Computer</div></div><div class="ssep" style="top:348px"></div><div class="srow" style="top:354px"><svg width="16" height="16" viewBox="0 0 16 16" ><path d="M0.200 1.300 H6.400 V3 H14.700 V4.700 H2.100 V13.600 H3.400 V15.400 H0.200 Z" fill="#686868"/><rect x="3.300" y="5.900" width="12.600" height="9.500" fill="#686868"/></svg><div class="lab">Macintosh HD</div></div><div class="srow" style="top:384px"><svg width="16" height="16" viewBox="0 0 16 16" ><path d="M0.200 1.300 H6.400 V3 H14.700 V4.700 H2.100 V13.600 H3.400 V15.400 H0.200 Z" fill="#686868"/><rect x="3.300" y="5.900" width="12.600" height="9.500" fill="#686868"/></svg><div class="lab">apfs_vol</div></div><div class="ssep" style="top:418px"></div><div class="srow" style="top:424px"><svg width="16" height="16" viewBox="0 0 16 16" ><rect x="3.700" y="1" width="7.600" height="10" rx="0.800" fill="none" stroke="#686868" stroke-width="1.900"/><rect x="5.600" y="3.300" width="2.600" height="1" fill="#686868"/><rect x="8.800" y="5" width="1.100" height="1.100" fill="#686868"/><path d="M7.500 11.500 V14" stroke="#686868" stroke-width="1.700"/><rect x="0.300" y="13.600" width="13.800" height="1.800" fill="#686868"/></svg><div class="lab">Connect to Server</div></div></div><div class="gap"></div><div class="files"><div class="item" style="left:7px;top:16px;"><svg class="abs" style="left:52px;top:0" width="46" height="38" viewBox="0 0 46 38"><use href="#fold"/></svg><div class="lab" style="top:41px">Apps</div></div><div class="item" style="left:162px;top:16px;"><svg class="abs" style="left:52px;top:0" width="46" height="38" viewBox="0 0 46 38"><use href="#fold"/></svg><div class="lab" style="top:41px">Music</div></div><div class="item" style="left:317px;top:16px;"><svg class="abs" style="left:52px;top:0" width="46" height="38" viewBox="0 0 46 38"><use href="#fold"/></svg><div class="lab" style="top:41px">Photo</div></div></div></div>
<div id="term">
<div class="tb">
<div class="abs" style="left:8px;top:6px;width:15px;height:15px;border-radius:8px;background:radial-gradient(circle at 50% 35%,#f58a6c,#e8532f 70%);box-shadow:0 0 0 1px rgba(60,30,20,.55),inset 0 1px 0 rgba(255,255,255,.3);"><svg width="15" height="15" viewBox="0 0 15 15"><path d="M4.800 4.800 L10.200 10.200 M10.200 4.800 L4.800 10.200" stroke="#5c1f0e" stroke-width="1.300"/></svg></div>
<div class="abs" style="left:27px;top:6px;width:15px;height:15px;border-radius:8px;background:linear-gradient(#8d8a82,#6a6860);box-shadow:0 0 0 1px rgba(40,40,36,.6),inset 0 1px 0 rgba(255,255,255,.25);"><svg width="15" height="15" viewBox="0 0 15 15"><path d="M4.300 7.500 H10.700" stroke="#3a3935" stroke-width="1.300"/></svg></div>
<div class="abs" style="left:46px;top:6px;width:15px;height:15px;border-radius:8px;background:linear-gradient(#8d8a82,#6a6860);box-shadow:0 0 0 1px rgba(40,40,36,.6),inset 0 1px 0 rgba(255,255,255,.25);"><svg width="15" height="15" viewBox="0 0 15 15"><rect x="4.600" y="4.600" width="5.800" height="5.800" fill="none" stroke="#3a3935" stroke-width="1.100"/></svg></div>
<div class="tt">apple@apple-virtual-machine: ~/Downloads</div>
</div>
<div class="body">
<pre><span class="g">apple@apple-virtual-machine</span>:<span class="b">~/Downloads</span>$ mount |grep ufsd
/dev/sda2 on /tmp/Macintosh HD type <span class="r">ufsd</span> (ro,relatime,nls=utf8)
/dev/sdb2 on /tmp/apfs_vol type <span class="r">ufsd</span> (ro,relatime,nls=utf8)
<span class="g">apple@apple-virtual-machine</span>:<span class="b">~/Downloads</span>$ <span class="cur"></span></pre>
</div>
</div>

<div id="launcher">
<!-- coordinates inside launcher are relative to top:24 -->
<!-- Dash -->
<div class="tile" style="top:6px;background:radial-gradient(ellipse 36px 20px at 50% 0%,rgba(255,255,255,.5),rgba(255,255,255,0) 100%),linear-gradient(160deg,#9a3a8c 0%,#8f1f7d 45%,#8a1c78 70%,#97308a 100%);box-shadow:inset 0 0 0 1px rgba(255,255,255,.14);">
<svg width="52" height="52" viewBox="0 0 52 52">
<path d="M3 17 C14 5 36 4 43 18 C47 27 44 38 36 43 C45 33 43 20 34 14 C24 8 10 10 3 17 Z" fill="#fff" opacity=".22"/>
<path d="M49 34 C40 47 20 48 11 36 C6 29 7 19 13 13 C7 24 9 33 17 39 C27 46 42 42 49 34 Z" fill="#fff" opacity=".2"/>
<path d="M8 28 C9 40 16 47 23 50 C15 49 7 42 6 32 Z" fill="#fff" opacity=".12"/>
<circle cx="25.600" cy="26.300" r="13.900" fill="#fff"/>
<g transform="translate(26 25.500)">
<circle r="6.800" fill="none" stroke="#5a0c50" stroke-width="2.900"/>
<g stroke="#fff" stroke-width="1.200">
<line x1="3" y1="0" x2="10" y2="0" transform="rotate(0)"/>
<line x1="3" y1="0" x2="10" y2="0" transform="rotate(120)"/>
<line x1="3" y1="0" x2="10" y2="0" transform="rotate(240)"/>
</g>
<g fill="#5a0c50" stroke="#fff" stroke-width="1">
<circle cx="-10.300" cy="0" r="2.500"/>
<circle cx="5.150" cy="-8.900" r="2.500"/>
<circle cx="5.150" cy="8.900" r="2.500"/>
</g>
</g>
</svg>
</div>
<!-- Files -->
<div class="tile" style="top:65px;background:radial-gradient(ellipse 40px 22px at 50% 0%,rgba(255,255,255,.45),rgba(255,255,255,0) 100%),linear-gradient(#8f3f52,#873549 60%,#8b3b4c);box-shadow:inset 0 0 0 1px rgba(255,255,255,.1);">
<svg width="52" height="52" viewBox="0 0 52 52">
<defs>
<linearGradient id="fc1" x1="0" y1="0" x2="0" y2="1"><stop offset="0" stop-color="#cbcbcb"/><stop offset="1" stop-color="#a3a3a3"/></linearGradient>
<linearGradient id="fc2" x1="0" y1="0" x2="0" y2="1"><stop offset="0" stop-color="#eceeee"/><stop offset="1" stop-color="#cfd1d1"/></linearGradient>
<linearGradient id="fc3" x1="0" y1="0" x2="0" y2="1"><stop offset="0" stop-color="#f6f6f6"/><stop offset="1" stop-color="#d6d6d6"/></linearGradient>
</defs>
<path d="M6.400 4.100 H45.600 L47 8.700 V44 H5 V8.700 Z" fill="#bdbdbd"/>
<path d="M6.400 4.100 H45.600 L47 8.700 H5 Z" fill="url(#fc2)"/>
<rect x="5" y="8.700" width="42" height="1" fill="#d9d9d9"/>
<rect x="8" y="12" width="36.200" height="9.500" rx=".8" fill="#2b2b2b"/>
<rect x="12" y="13.400" width="30" height="5" rx=".6" fill="#d8652e"/>
<path d="M9.200 15.900 Q9.200 15.300 9.800 15.300 H19.500 L20.500 16 H42.400 Q43 16 43 16.600 V21.500 H9.200 Z" fill="#f3ab4c"/>
<rect x="11" y="16.900" width="29.700" height="1" fill="#fffdf6"/>
<rect x="9.200" y="17.900" width="33.800" height=".9" fill="#e0742c"/>
<rect x="9.200" y="18.800" width="33.800" height="2.700" fill="#f7c66e"/>
<path d="M7.100 21.300 H44.900 L45.400 47 H6.600 Z" fill="url(#fc1)"/>
<rect x="7.100" y="21.300" width="37.800" height="1.200" fill="#e6e6e6"/>
<rect x="19" y="30.200" width="14.200" height="11" rx="2" fill="#b7b7b7" stroke="#d6d6d6" stroke-width="1.200"/>
<rect x="21.300" y="32.300" width="9.400" height="5.600" rx="1" fill="url(#fc3)" stroke="#555" stroke-width="1"/>
</svg>
</div>
<!-- Firefox -->
<div class="tile dk" style="top:124px;">
<svg width="52" height="52" viewBox="0 0 52 52">
<defs>
<linearGradient id="ffg" gradientUnits="userSpaceOnUse" x1="46" y1="12" x2="5" y2="37"><stop offset="0" stop-color="#fff25a"/><stop offset="0.22" stop-color="#ffd21f"/><stop offset="0.45" stop-color="#ff9a1a"/><stop offset="0.68" stop-color="#ff4a2e"/><stop offset="0.88" stop-color="#fb2a4a"/><stop offset="1" stop-color="#e0168a"/></linearGradient>
<radialGradient id="ffh" gradientUnits="userSpaceOnUse" cx="24" cy="24" r="13"><stop offset="0" stop-color="#ffb02a" stop-opacity=".95"/><stop offset="0.55" stop-color="#ff8a24" stop-opacity=".6"/><stop offset="1" stop-color="#ff5a30" stop-opacity="0"/></radialGradient>
<linearGradient id="fff" gradientUnits="userSpaceOnUse" x1="34" y1="3" x2="46" y2="40"><stop offset="0" stop-color="#fff565"/><stop offset="0.45" stop-color="#ffdb2e"/><stop offset="1" stop-color="#ff9f1c"/></linearGradient>
<linearGradient id="ffb" gradientUnits="userSpaceOnUse" x1="28" y1="6" x2="24" y2="37"><stop offset="0" stop-color="#62bcff"/><stop offset="0.3" stop-color="#1f80f4"/><stop offset="0.58" stop-color="#1e4fd6"/><stop offset="0.82" stop-color="#2b2ba0"/><stop offset="1" stop-color="#3a1c8c"/></linearGradient>
</defs>
<path d="M7.600 13.400 C8 11 8.800 9 9.900 7.300 C10.400 9.200 11 10.600 11.800 11.700 C14 10.500 17.500 10 20.500 10.600 L22.700 10.100 L27 12 L30.700 6.400 L33.500 2.200 C36 5.500 38.500 7.200 40.300 8.600 C40.500 7.800 40.700 7.200 41 6.600 C45 11 48.300 18 48.600 26 C49 38.500 39.500 48.600 27 48.600 C14 48.600 4.100 39 4.100 26.500 C4.100 21 5.600 16.500 7.600 13.400 Z" fill="url(#ffg)"/>
<path d="M11.500 14.500 A15.600 15.600 0 0 1 30.700 6.400 C30.200 8 30.200 10 30.600 12.500 C31.500 16 33.500 19 35.300 20.400 C36.500 21.600 37.300 23 37.600 24.600 A11.900 11.900 0 0 1 13.800 24.600 Z" fill="url(#ffb)"/>
<path d="M11.800 11.700 C14 10.500 17.500 10 20.500 10.600 L22.700 10.100 C21.800 11.500 21 13.500 20.600 16 C22.500 16 24.500 16.600 26 17.600 C24.500 18.800 22.300 19.600 20.800 22.600 C20.300 23.600 19.600 24.200 18.800 24.600 C17.800 27.500 18.800 30.500 21.500 32.300 C24.300 33.800 27.500 32.300 29.700 30.700 C30.300 31.800 29.600 33 28.600 33.600 C26 35.500 23 36.400 20 35.800 L13 33.500 L7.500 26 L8.500 15.500 Z" fill="url(#ffg)"/>
<path d="M11.800 11.700 C14 10.500 17.500 10 20.500 10.600 L22.700 10.100 C21.800 11.500 21 13.500 20.600 16 C22.500 16 24.500 16.600 26 17.600 C24.500 18.800 22.300 19.600 20.800 22.600 C20.300 23.600 19.600 24.200 18.800 24.600 C17.800 27.500 18.800 30.500 21.500 32.300 C24.300 33.800 27.500 32.300 29.700 30.700 C30.300 31.800 29.600 33 28.600 33.600 C26 35.500 23 36.400 20 35.800 L13 33.500 L7.500 26 L8.500 15.500 Z" fill="url(#ffh)"/>
<path d="M33.500 2.200 C36 5.500 38.500 7.200 40.300 8.600 C40.500 7.800 40.700 7.200 41 6.600 C45 11 48.300 18 48.600 26 C48.800 33 46 39.500 41 43.500 C44.500 37.500 44.300 31.500 41.500 27 C40.300 24.800 38.500 23.500 36.700 22.300 C34 19.500 31.800 15.500 31 12 C30.400 9.500 30.300 7.800 30.700 6.400 C31.500 5 32.500 3.500 33.500 2.200 Z" fill="url(#fff)"/>
</svg>
</div>
<!-- Writer -->
<div class="tile dk" style="top:183px;">
<svg width="52" height="52" viewBox="0 0 52 52">
<defs><linearGradient id="lw" gradientUnits="userSpaceOnUse" x1="0" y1="2" x2="0" y2="22"><stop offset="0" stop-color="#4b9cc6"/><stop offset="1" stop-color="#0b5982"/></linearGradient>
<linearGradient id="lp" x1="0" y1="0" x2="0" y2="1"><stop offset="0" stop-color="#f4f4f4"/><stop offset="1" stop-color="#e6e6e6"/></linearGradient></defs>
<path d="M7.500 3.500 H28.600 L44.800 19.800 V47.500 Q44.800 48.500 43.800 48.500 H8.500 Q7.500 48.500 7.500 47.500 Z" fill="url(#lp)" stroke="url(#lw)" stroke-width="3" stroke-linejoin="round"/>
<path d="M34.500 2 H45 Q46 2 46 3 V13.500 Z" fill="#4197bb" stroke="#4197bb" stroke-width=".8" stroke-linejoin="round"/>
<g fill="#0d4c7d"><rect x="14" y="20.200" width="8" height="1.800"/><rect x="14" y="24.200" width="8" height="1.800"/><rect x="14" y="28.200" width="8" height="1.800"/><rect x="14" y="32.200" width="24" height="1.800"/><rect x="14" y="36.200" width="24" height="1.800"/><rect x="14" y="40.200" width="18" height="1.800"/></g>
<rect x="24.500" y="20.400" width="13" height="9" fill="#8fc8ee" stroke="#0d4c7d" stroke-width="1"/>
<path d="M25 28.900 L28.700 22.800 L30.800 26.500 L33.800 24.800 L37 28.900 Z" fill="#3f3f3f"/>
<path d="M34 20.900 H37 V23.800 Q34.300 23.600 34 20.900 Z" fill="#f0c132"/>
</svg>
</div>
<!-- Calc -->
<div class="tile dk" style="top:242px;">
<svg width="52" height="52" viewBox="0 0 52 52">
<defs><linearGradient id="lc" gradientUnits="userSpaceOnUse" x1="0" y1="2" x2="0" y2="22"><stop offset="0" stop-color="#7fce78"/><stop offset="1" stop-color="#12861a"/></linearGradient></defs>
<path d="M7.500 3.500 H28.600 L44.800 19.800 V47.500 Q44.800 48.500 43.800 48.500 H8.500 Q7.500 48.500 7.500 47.500 Z" fill="url(#lp)" stroke="url(#lc)" stroke-width="3" stroke-linejoin="round"/>
<path d="M34.500 2 H45 Q46 2 46 3 V13.500 Z" fill="#4fb04a" stroke="#4fb04a" stroke-width=".8" stroke-linejoin="round"/>
<rect x="13.900" y="19.900" width="21.900" height="21" fill="#18881a"/>
<rect x="14.9" y="20.9" width="5.800" height="2.800" fill="#a6dd98"/><rect x="22.0" y="20.9" width="5.800" height="2.800" fill="#a6dd98"/><rect x="29.1" y="20.9" width="5.800" height="2.800" fill="#a6dd98"/><rect x="14.9" y="25.0" width="5.800" height="2.800" fill="#e2f8da"/><rect x="22.0" y="25.0" width="5.800" height="2.800" fill="#e2f8da"/><rect x="29.1" y="25.0" width="5.800" height="2.800" fill="#e2f8da"/><rect x="14.9" y="29.1" width="5.800" height="2.800" fill="#e2f8da"/><rect x="22.0" y="29.1" width="5.800" height="2.800" fill="#e2f8da"/><rect x="29.1" y="29.1" width="5.800" height="2.800" fill="#e2f8da"/><rect x="14.9" y="33.2" width="5.800" height="2.800" fill="#e2f8da"/><rect x="22.0" y="33.2" width="5.800" height="2.800" fill="#e2f8da"/><rect x="29.1" y="33.2" width="5.800" height="2.800" fill="#e2f8da"/><rect x="14.9" y="37.3" width="5.800" height="2.800" fill="#e2f8da"/><rect x="22.0" y="37.3" width="5.800" height="2.800" fill="#e2f8da"/><rect x="29.1" y="37.3" width="5.800" height="2.800" fill="#e2f8da"/>
<rect x="27.400" y="31.300" width="10.300" height="10.200" fill="#f6f6f6" stroke="#8c8c8c" stroke-width="1"/>
<rect x="28.300" y="36" width="2.700" height="4.900" fill="#2d96e8"/><rect x="31.200" y="33" width="2.700" height="7.900" fill="#e0661f"/><rect x="34.200" y="37.900" width="2.700" height="3" fill="#f3c42e"/>
</svg>
</div>
<!-- Impress -->
<div class="tile dk" style="top:301px;">
<svg width="52" height="52" viewBox="0 0 52 52">
<defs><linearGradient id="li" gradientUnits="userSpaceOnUse" x1="0" y1="2" x2="0" y2="22"><stop offset="0" stop-color="#cf8a58"/><stop offset="1" stop-color="#8a3506"/></linearGradient>
<linearGradient id="ls" x1="0" y1="0" x2="0" y2="1"><stop offset="0" stop-color="#fff4ea"/><stop offset="1" stop-color="#f8d2b8"/></linearGradient></defs>
<path d="M7.500 3.500 H28.600 L44.800 19.800 V47.500 Q44.800 48.500 43.800 48.500 H8.500 Q7.500 48.500 7.500 47.500 Z" fill="url(#lp)" stroke="url(#li)" stroke-width="3" stroke-linejoin="round"/>
<path d="M34.500 2 H45 Q46 2 46 3 V13.500 Z" fill="#c5713a" stroke="#c5713a" stroke-width=".8" stroke-linejoin="round"/>
<path d="M20.500 41.700 L26 37.500 L31.500 41.700" fill="none" stroke="#666" stroke-width="1.500"/>
<rect x="14.700" y="20.800" width="22.600" height="16.500" fill="url(#ls)" stroke="#b5490f" stroke-width="1.300"/>
<rect x="17.100" y="23.200" width="17.800" height="1.700" fill="#d2570f"/>
<g fill="#7a2406"><rect x="20.900" y="27" width="5.200" height="1.900"/><rect x="20.900" y="30" width="5.200" height="1.900"/><rect x="20.900" y="33" width="5.200" height="1.900"/></g>
<g fill="#e8844a"><rect x="17.200" y="27" width="1.900" height="1.900"/><rect x="17.200" y="30" width="1.900" height="1.900"/><rect x="17.200" y="33" width="1.900" height="1.900"/></g>
<rect x="27.600" y="27.600" width="6.900" height="6.900" fill="#f4f8ef" stroke="#8a8a8a" stroke-width=".9"/>
<path d="M28.600 33.300 L30 31 L31.300 31.700 L33.500 28.500" fill="none" stroke="#2f9a2f" stroke-width="1.200"/>
</svg>
</div>
<!-- Software Center -->
<div class="tile dk" style="top:360px;">
<svg width="52" height="52" viewBox="0 0 52 52">
<defs><linearGradient id="sw1" x1="0" y1="0" x2="0" y2="1"><stop offset="0" stop-color="#ee9258"/><stop offset="0.35" stop-color="#ee8040"/><stop offset="0.675" stop-color="#ec7230"/><stop offset="0.69" stop-color="#ee7e42"/><stop offset="1" stop-color="#ef8348"/></linearGradient><radialGradient id="sw2" cx="0.15" cy="0.05" r="0.7"><stop offset="0" stop-color="#f6c08a" stop-opacity=".55"/><stop offset="1" stop-color="#f6c08a" stop-opacity="0"/></radialGradient></defs>
<path d="M7.100 10.100 H44.900 L47 13.600 H5 Z" fill="#e89464"/>
<path d="M9 11.200 H43 L44.500 13.600 H7.500 Z" fill="#d07a4c"/>
<path d="M5 13.400 H47 V47 H5 Z" fill="url(#sw1)"/><path d="M5 13.400 H47 V47 H5 Z" fill="url(#sw2)"/>
<path d="M20.600 17.600 V9.500 L22.800 5.700 H29.200 L31.400 9.500 V17.600" fill="none" stroke="#ee8558" stroke-width="3.300" stroke-linejoin="miter"/>
<path d="M21.700 17.600 V9.800 L23.300 6.800 H28.700 L30.300 9.800 V17.600" fill="none" stroke="#f5a680" stroke-width=".7" opacity=".8"/>
<path d="M24 22 H28 L35.200 39.800 H30.900 L26 26.600 L21.100 39.800 H16.800 Z" fill="#fff"/>
<rect x="16.700" y="31.400" width="18.600" height="5.300" rx="2.650" fill="#fff"/>
<rect x="18.300" y="33" width="10.300" height="2" rx="1" fill="#e04a10"/>
</svg>
</div>
<!-- Amazon -->
<div class="tile dk" style="top:419px;">
<svg width="52" height="52" viewBox="0 0 52 52">
<defs><linearGradient id="am1" x1="0" y1="0" x2="0" y2="1"><stop offset="0" stop-color="#fbfbfb"/><stop offset="1" stop-color="#e4e4e4"/></linearGradient></defs>
<rect x="6" y="6" width="40" height="40" rx="2" fill="url(#am1)"/>
<text transform="translate(25.800 33.300) scale(1.04 1.2)" x="0" y="0" text-anchor="middle" font-family="'Liberation Sans','DejaVu Sans',sans-serif" font-weight="bold" font-size="33" fill="#222" stroke="#222" stroke-width=".8">a</text>
<path d="M8 33.800 Q25 46 42.500 35.300 Q25 41.500 8 33.800 Z" fill="#f7951d" stroke="#f7951d" stroke-width="1.200" stroke-linejoin="round"/>
<path d="M38.500 33 L44 33.200 L42.200 38" fill="none" stroke="#f7951d" stroke-width="1.900" stroke-linejoin="round" stroke-linecap="round"/>
</svg>
</div>
<!-- Settings -->
<div class="tile dk" style="top:478px;">
<svg width="52" height="52" viewBox="0 0 52 52">
<defs>
<linearGradient id="gr1" x1="0" y1="0" x2="0" y2="1"><stop offset="0" stop-color="#f6f6f6"/><stop offset="1" stop-color="#dcdcdc"/></linearGradient>
<linearGradient id="wr1" gradientUnits="userSpaceOnUse" x1="0" y1="-4" x2="0" y2="4"><stop offset="0" stop-color="#e2574a"/><stop offset="0.35" stop-color="#dc3c30"/><stop offset="1" stop-color="#b8231c"/></linearGradient>
<linearGradient id="wr2" gradientUnits="userSpaceOnUse" x1="0" y1="-8" x2="0" y2="8"><stop offset="0" stop-color="#ffffff"/><stop offset="1" stop-color="#d4d4cf"/></linearGradient>
<mask id="wm" maskUnits="userSpaceOnUse" x="30" y="-10" width="26" height="20"><rect x="30" y="-10" width="26" height="20" fill="#fff"/><path d="M56 -3.300 H42.800 A3.300 3.300 0 0 0 42.800 3.300 H56 Z" fill="#000"/></mask>
</defs>
<g transform="translate(26 25.500)">
<g fill="url(#gr1)"><circle r="18.200"/><path d="M-5.400 -16 L-4.700 -21.200 Q-4.600 -21.900 -3.900 -21.900 H3.900 Q4.600 -21.900 4.700 -21.200 L5.400 -16 Z" transform="rotate(0)"/><path d="M-5.400 -16 L-4.700 -21.200 Q-4.600 -21.900 -3.900 -21.900 H3.900 Q4.600 -21.900 4.700 -21.200 L5.400 -16 Z" transform="rotate(45)"/><path d="M-5.400 -16 L-4.700 -21.200 Q-4.600 -21.900 -3.900 -21.900 H3.900 Q4.600 -21.900 4.700 -21.200 L5.400 -16 Z" transform="rotate(90)"/><path d="M-5.400 -16 L-4.700 -21.200 Q-4.600 -21.900 -3.900 -21.900 H3.900 Q4.600 -21.900 4.700 -21.200 L5.400 -16 Z" transform="rotate(135)"/><path d="M-5.400 -16 L-4.700 -21.200 Q-4.600 -21.900 -3.900 -21.900 H3.900 Q4.600 -21.900 4.700 -21.200 L5.400 -16 Z" transform="rotate(180)"/><path d="M-5.400 -16 L-4.700 -21.200 Q-4.600 -21.900 -3.900 -21.900 H3.900 Q4.600 -21.900 4.700 -21.200 L5.400 -16 Z" transform="rotate(225)"/><path d="M-5.400 -16 L-4.700 -21.200 Q-4.600 -21.900 -3.900 -21.900 H3.900 Q4.600 -21.900 4.700 -21.200 L5.400 -16 Z" transform="rotate(270)"/><path d="M-5.400 -16 L-4.700 -21.200 Q-4.600 -21.900 -3.900 -21.900 H3.900 Q4.600 -21.900 4.700 -21.200 L5.400 -16 Z" transform="rotate(315)"/></g>
<circle r="13.600" fill="#e2e2e2" stroke="#cfcfcf" stroke-width=".9"/>
<circle r="7.100" fill="#4b1443"/>
</g>
<g transform="translate(9.200 42.300) rotate(-45)">
<rect x="-4.300" y="-4.100" width="37" height="8.200" rx="4.100" fill="url(#wr1)"/>
<rect x="-1" y="-2.700" width="31" height="1.300" rx=".6" fill="#f08a7c" opacity=".75"/>
<circle cx="0" cy="0" r="1.800" fill="#5c1712" stroke="#ea6a5c" stroke-width=".7"/>
<g mask="url(#wm)">
<path d="M31 -3.600 L36.500 -2.900 C37.600 -5.900 40.400 -8 43.600 -8 A8 8 0 0 1 43.600 8 C40.400 8 37.600 5.900 36.500 2.900 L31 3.600 Z" fill="url(#wr2)" stroke="#b4b4ae" stroke-width=".8"/>
</g>
<path d="M50 -3.300 H42.800 A3.300 3.300 0 0 0 42.800 3.300 H50" fill="none" stroke="#a8a8a2" stroke-width=".7"/>
</g>
</svg>
</div>
<!-- Terminal (active) -->
<div class="tile" style="top:537px;background:radial-gradient(ellipse 40px 20px at 50% 0%,rgba(255,255,255,.45),rgba(255,255,255,0) 100%),linear-gradient(#b5abb4,#a79ea6 50%,#aaa2a9);box-shadow:inset 0 0 0 1px rgba(255,255,255,.18);">
<svg width="52" height="52" viewBox="0 0 52 52">
<defs><linearGradient id="tm1" x1="0" y1="0" x2="0" y2="1"><stop offset="0" stop-color="#474747"/><stop offset="0.45" stop-color="#2c2c2c"/><stop offset="1" stop-color="#1b1b1b"/></linearGradient></defs>
<rect x="3.500" y="9.500" width="45" height="36" rx="1" fill="#d9d9d9" stroke="#8e8e8e" stroke-width="1"/>
<rect x="4.500" y="10.500" width="43" height="2" fill="#f4f4f4"/>
<rect x="7" y="13" width="38" height="29.500" fill="url(#tm1)" stroke="#0f0f0f" stroke-width="1"/>
<path d="M11.500 19.500 L17.500 23.500 L11.500 27.300" fill="none" stroke="#eee" stroke-width="2.300"/>
<rect x="20" y="28.500" width="8" height="2.200" fill="#eee"/>
</svg>
</div>
<!-- Trash -->
<div class="tile" style="top:1118px;background:radial-gradient(ellipse 40px 20px at 50% 0%,rgba(255,255,255,.45),rgba(255,255,255,0) 100%),linear-gradient(#5f2b58,#4a1243 40%,#5b2754);box-shadow:inset 0 0 0 1px rgba(255,255,255,.14);">
<svg width="52" height="52" viewBox="0 0 52 52">
<defs><linearGradient id="tr1" x1="0" y1="0" x2="1" y2="0"><stop offset="0" stop-color="#bdbdbd"/><stop offset="0.5" stop-color="#ffffff"/><stop offset="1" stop-color="#b5b5b5"/></linearGradient></defs>
<path d="M8.500 9 L12 44 Q26 49 40 44 L43.500 9 Z" fill="#a58fa3" opacity=".38"/>
<ellipse cx="26" cy="44" rx="14" ry="3.200" fill="#d4d4d2"/>
<ellipse cx="26" cy="8.500" rx="18" ry="4.200" fill="none" stroke="url(#tr1)" stroke-width="2.800"/>
</svg>
</div>
<!-- indicators -->
<svg class="abs" style="left:0;top:87px" width="6" height="8" viewBox="0 0 6 8"><path d="M0 0.300 H3.500 L4.800 1.300 L3.500 2.300 H0 Z M0 4.300 H3.500 L4.800 5.300 L3.500 6.300 H0 Z" fill="#ddd6dc"/></svg>
<svg class="abs" style="left:0;top:557px" width="5" height="12" viewBox="0 0 5 12"><path d="M0 2.500 L4.500 6 L0 9.500 Z" fill="#ddd6dc"/></svg>
<svg class="abs" style="left:59px;top:557px" width="5" height="12" viewBox="0 0 5 12"><path d="M5 2.500 L0.500 6 L5 9.500 Z" fill="#ddd6dc"/></svg>
</div>

<div id="panel">
<div class="title">Terminal</div>
<svg class="ind" style="left:1729px" width="20" height="24" viewBox="0 0 20 24"><path d="M6 3.5 L10.8 9 H7.8 V16 H4.2 V9 H1.2 Z" fill="#e3dfd6"/><path d="M13.5 20.5 L8.7 15 H11.7 V8 H15.3 V15 H18.3 Z" fill="#e3dfd6"/></svg>
<div class="en">En</div>
<svg class="ind" style="left:1790px" width="14" height="24" viewBox="0 0 14 24"><path d="M3 8 L10.2 15.3 L6.8 19 V5 L10.2 8.7 L3 16" fill="none" stroke="#8d8a82" stroke-width="1.2"/></svg>
<svg class="ind" style="left:1813px" width="24" height="24" viewBox="0 0 24 24"><path d="M2 9.300 H5 L9 5.600 V18.400 L5 14.700 H2 Z" fill="#e3dfd6"/><path d="M11 8.800 Q12.900 12 11 15.200" fill="none" stroke="#e3dfd6" stroke-width="1.700"/><path d="M13.800 6.800 Q16.800 12 13.800 17.200" fill="none" stroke="#e3dfd6" stroke-width="1.700"/><path d="M16.800 4.200 Q21.200 12 16.800 19.800" fill="none" stroke="#908d85" stroke-width="1.400"/></svg>
<div class="clock">17:14</div>
<svg class="ind" style="left:1894px" width="20" height="24" viewBox="0 0 20 24"><g transform="translate(10 12.300)"><g fill="#e3dfd6"><rect x="-1.400" y="5.700" width="2.800" height="2.700" transform="rotate(0)"/><rect x="-1.400" y="5.700" width="2.800" height="2.700" transform="rotate(45)"/><rect x="-1.400" y="5.700" width="2.800" height="2.700" transform="rotate(90)"/><rect x="-1.400" y="5.700" width="2.800" height="2.700" transform="rotate(135)"/><rect x="-1.400" y="5.700" width="2.800" height="2.700" transform="rotate(225)"/><rect x="-1.400" y="5.700" width="2.800" height="2.700" transform="rotate(270)"/><rect x="-1.400" y="5.700" width="2.800" height="2.700" transform="rotate(315)"/></g><path d="M-2.900 -4.300 A5.200 5.200 0 1 0 2.900 -4.300" fill="none" stroke="#e3dfd6" stroke-width="2.400"/><rect x="-1.150" y="-8.800" width="2.300" height="7.600" fill="#e3dfd6"/></g></svg>
</div>

</div>
</body>
</html>
